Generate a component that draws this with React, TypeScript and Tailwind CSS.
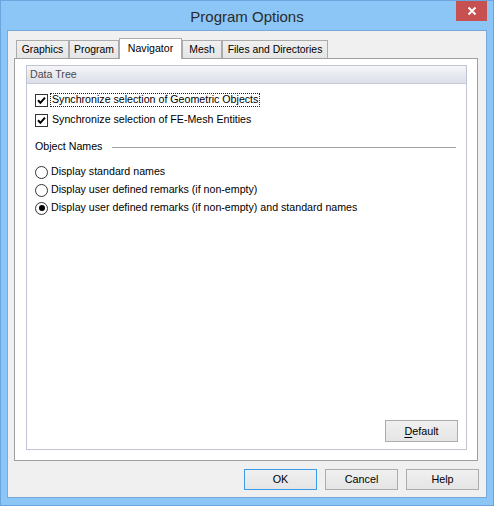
import type { ReactNode } from 'react'

const font = { fontFamily: '"Liberation Sans", Arial, sans-serif' }

function Tab({ label, width, active }: { label: string; width: string; active?: boolean }) {
  if (active) {
    return (
      <div
        className={`${width} h-[21px] -mb-px relative z-10 bg-white border border-b-0 border-[#acacac] flex justify-center pt-[2px] text-[10.6px] text-black`}
      >
        {label}
      </div>
    )
  }
  return (
    <div
      className={`${width} h-[18px] border border-b-0 border-[#acacac] bg-gradient-to-b from-[#f0f0f0] to-[#e5e5e5] flex justify-center items-center pt-[1px] text-[10.4px] text-black`}
    >
      {label}
    </div>
  )
}

function Checkbox({ children, focused }: { children: ReactNode; focused?: boolean }) {
  return (
    <div className="flex items-center h-[14px]">
      <div className="w-[13px] h-[13px] border border-[#333] bg-white flex items-center justify-center">
        <svg width="9" height="9" viewBox="0 0 9 9">
          <path d="M1 4.3 L3.4 6.8 L8 1.6" fill="none" stroke="#000" strokeWidth="2" />
        </svg>
      </div>
      <span
        className={`ml-[2px] px-px h-[14px] flex items-center text-[10.65px] text-black border ${
          focused ? 'border-dotted border-[#222]' : 'border-transparent'
        }`}
      >
        {children}
      </span>
    </div>
  )
}

function Radio({ children, checked }: { children: ReactNode; checked?: boolean }) {
  return (
    <div className="flex items-center h-[14px]">
      <div className="w-[13px] h-[13px] rounded-full border border-[#333] bg-white flex items-center justify-center">
        {checked && <div className="w-[6px] h-[6px] rounded-full bg-black" />}
      </div>
      <span className="ml-[3px] text-[10.65px] text-black">{children}</span>
    </div>
  )
}

function Button({ children, primary }: { children: ReactNode; primary?: boolean }) {
  return (
    <div
      className={`w-[73px] h-[21px] flex items-center justify-center border bg-gradient-to-b from-[#f0f0f0] to-[#e5e5e5] text-[10.8px] text-black ${
        primary ? 'border-[#3c9be8]' : 'border-[#acacac]'
      }`}
    >
      {children}
    </div>
  )
}

export default function App() {
  return (
    <div style={font} className="w-[494px] h-[506px] bg-[#8cc6f6] border border-[#6ca5dd] flex flex-col">
      {/* title bar */}
      <div className="h-[29px] flex items-start relative">
        <div className="flex-1 flex justify-center pt-[5px] text-[15px] text-[#2b2b2b]">Program Options</div>
        <div className="absolute right-[6px] top-0 w-[31px] h-[20px] bg-[#c75050] flex items-center justify-center">
          <svg width="10" height="10" viewBox="0 0 10 10">
            <path d="M1.5 1.5 L8.5 8.5 M8.5 1.5 L1.5 8.5" stroke="#fff" strokeWidth="2" />
          </svg>
        </div>
      </div>

      {/* client area */}
      <div className="mx-[6px] mb-[7px] flex-1 border border-[#78a9d8] bg-[#f0f0f0] flex flex-col">
        <div className="pl-[6px] pr-[8px] mt-[7px] flex flex-col flex-1">
          <div className="flex items-end h-[20px] pl-[2px]">
            <Tab label="Graphics" width="w-[53px]" />
            <Tab label="Program" width="w-[50px]" />
            <Tab label="Navigator" width="w-[63px]" active />
            <Tab label="Mesh" width="w-[40px]" />
            <Tab label="Files and Directories" width="w-[106px]" />
          </div>

          <div className="h-[403px] border border-[#a0a0a0] bg-white pl-[11px] pt-[6px] pr-[10px] pb-[10px] flex">
            <div className="flex-1 border border-[#c0c4d2] flex flex-col">
              <div className="h-[18px] border-b border-[#c8cbd6] bg-gradient-to-b from-[#f6f6f9] to-[#dcdfe9] flex items-center pl-[3px] text-[10.65px] text-[#4a4a4a]">
                Data Tree
              </div>
              <div className="flex-1 flex flex-col pl-[8px] pr-[8px] pt-[9px] pb-[7px]">
                <div className="flex flex-col gap-[6px]">
                  <Checkbox focused>Synchronize selection of Geometric Objects</Checkbox>
                  <Checkbox>Synchronize selection of FE-Mesh Entities</Checkbox>
                </div>

                <div className="mt-[13px] h-[14px] flex items-center text-[10.65px] text-black">
                  <span>Object Names</span>
                  <div className="flex-1 ml-[10px] mr-[2px] h-px bg-[#a0a0a0] mt-[1px]" />
                </div>

                <div className="mt-[11px] flex flex-col gap-[4px]">
                  <Radio>Display standard names</Radio>
                  <Radio>Display user defined remarks (if non-empty)</Radio>
                  <Radio checked>Display user defined remarks (if non-empty) and standard names</Radio>
                </div>

                <div className="mt-auto flex justify-end">
                  <div className="h-[22px] w-[73px] flex items-center justify-center border border-[#acacac] bg-gradient-to-b from-[#f0f0f0] to-[#e5e5e5] text-[10.8px] text-black">
                    <span className="underline underline-offset-2">D</span>efault
                  </div>
                </div>
              </div>
            </div>
          </div>

          <div className="mt-[8px] mb-[7px] flex justify-end gap-[8px] -mr-px">
            <Button primary>OK</Button>
            <Button>Cancel</Button>
            <Button>Help</Button>
          </div>
        </div>
      </div>
    </div>
  )
}
